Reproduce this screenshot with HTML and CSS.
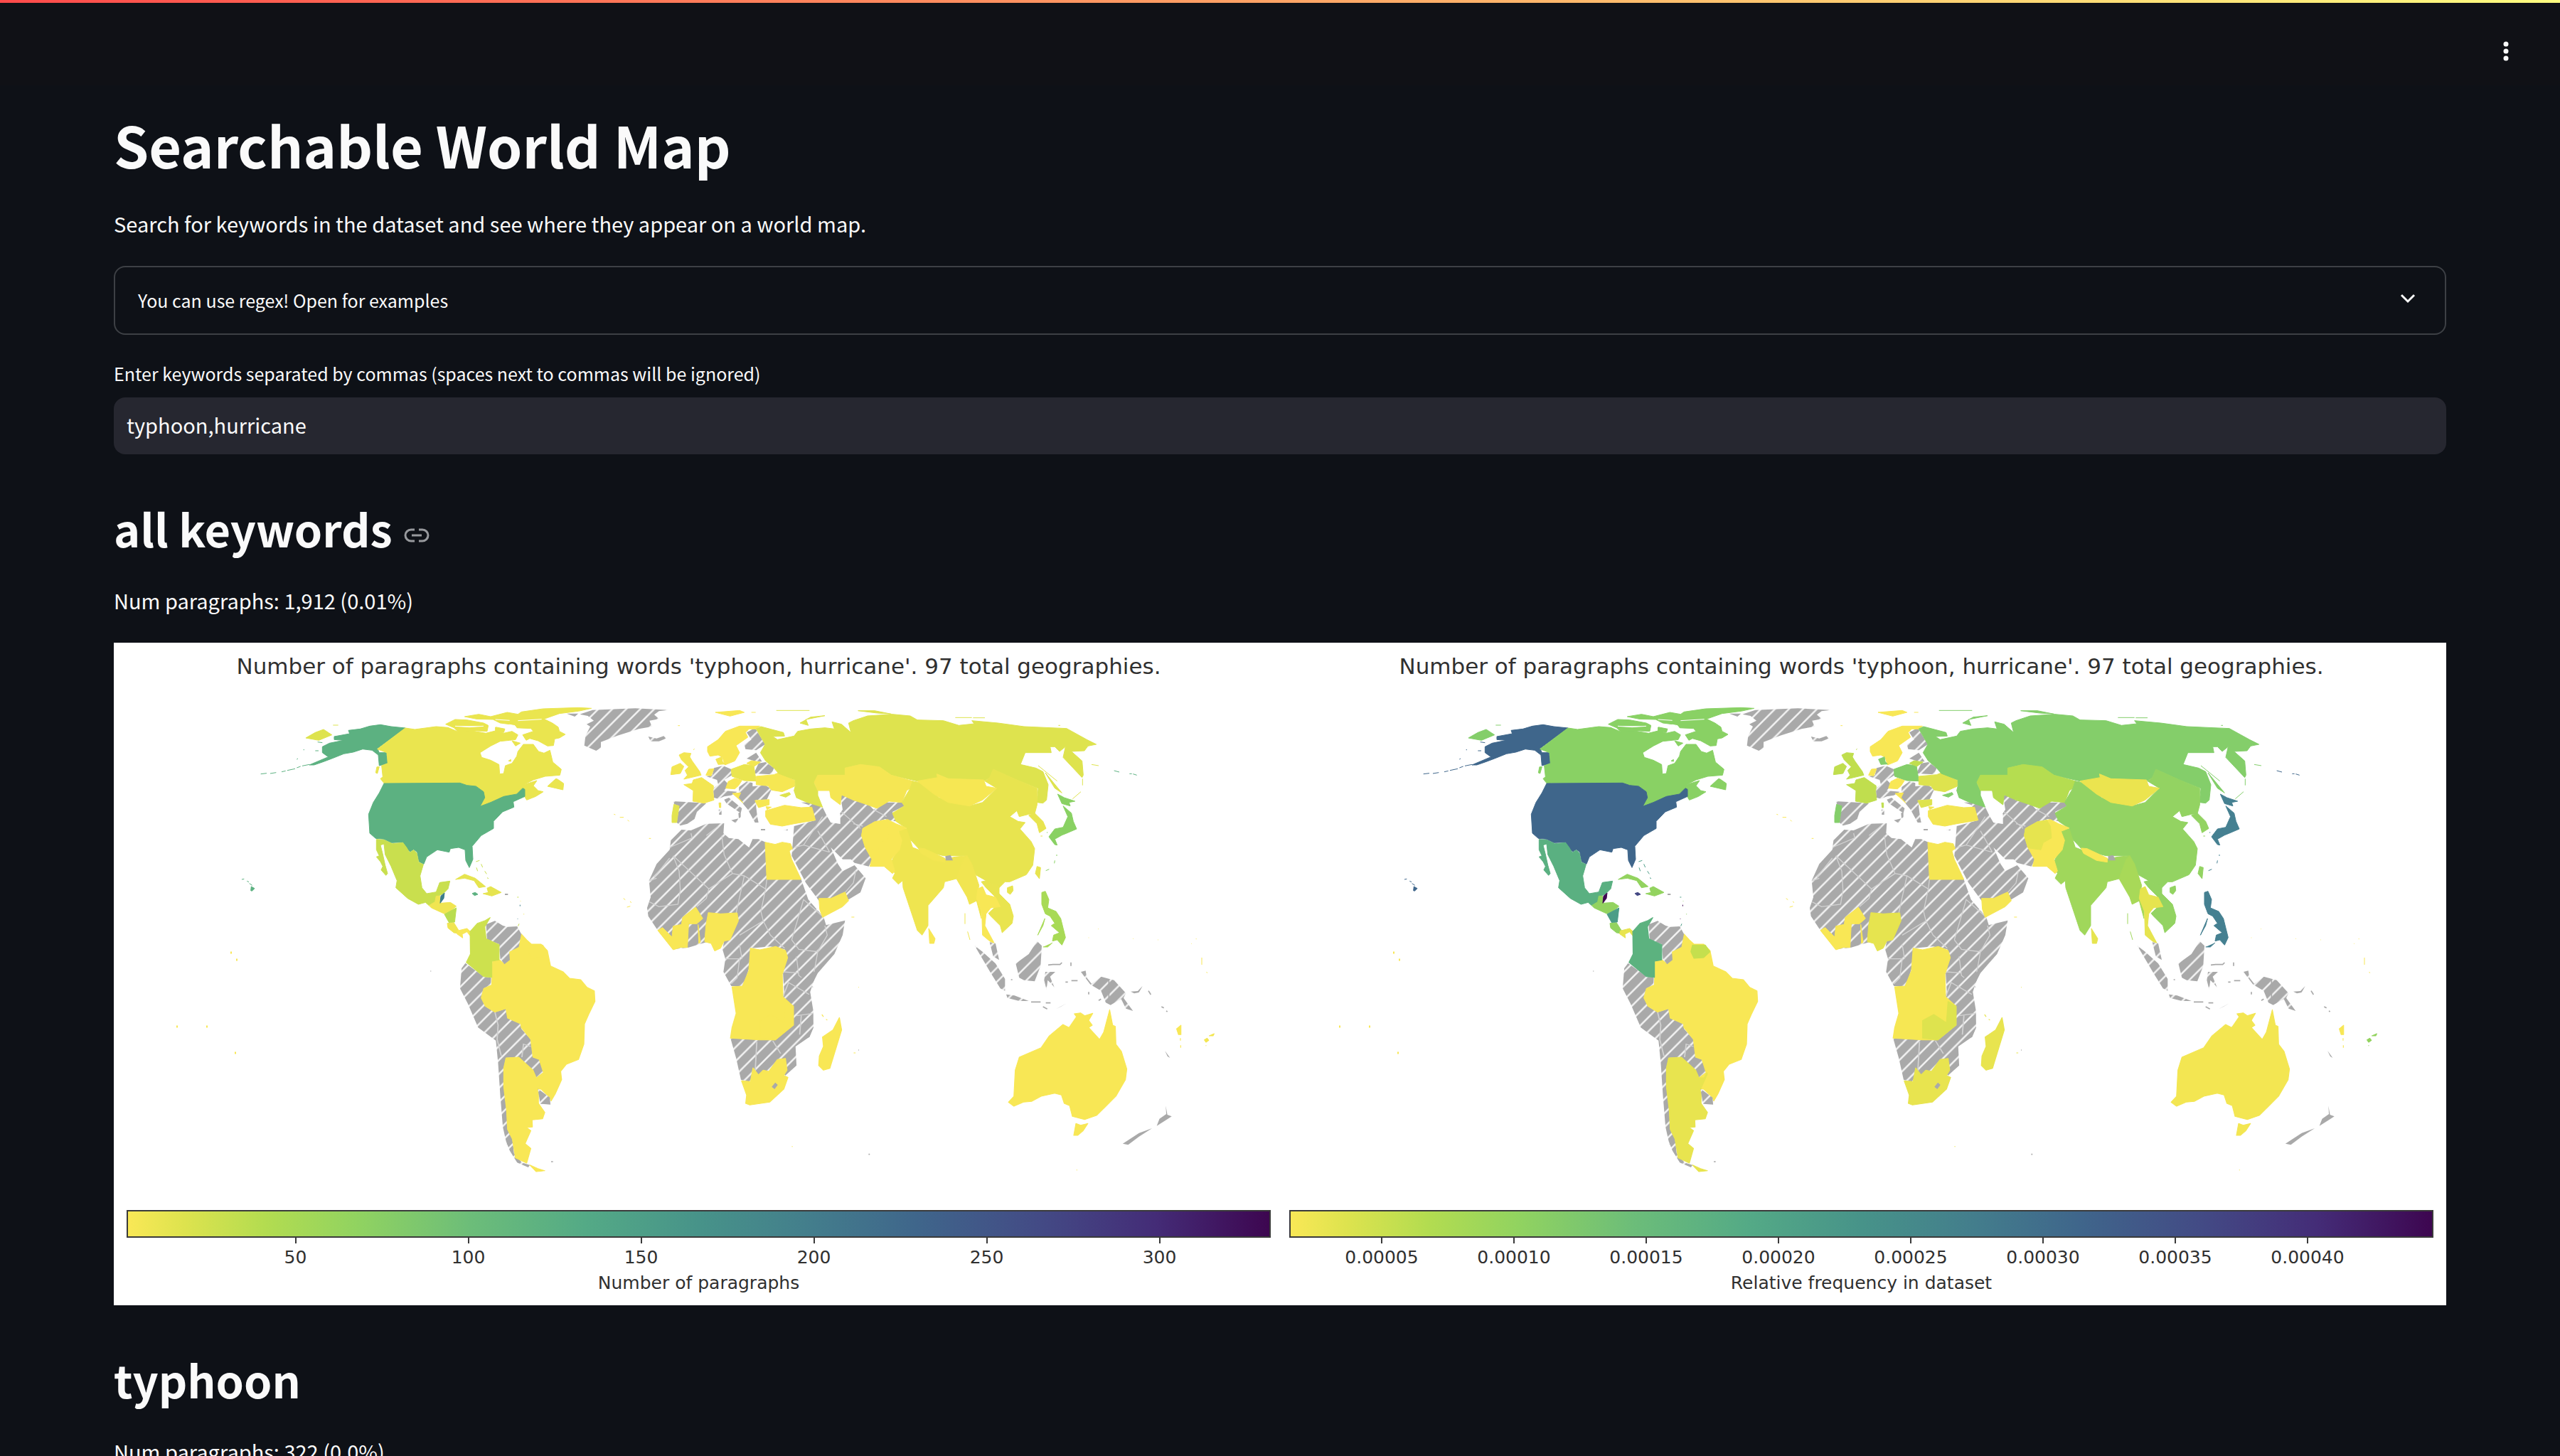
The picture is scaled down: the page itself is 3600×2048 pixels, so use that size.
FILE: index.html
```html
<!DOCTYPE html>
<html lang="en">
<head>
<meta charset="utf-8">
<title>Searchable World Map</title>
<link rel="stylesheet" href="styles.css">
</head>
<body>
<svg class="defs" width="0" height="0" aria-hidden="true">
  <defs>
    <pattern id="hatch" width="19.67" height="19.67" patternUnits="userSpaceOnUse">
      <rect width="20" height="20" fill="#a9a9a9"/>
      <path d="M-3 10.4L10.4 -3M4.4 22.67L22.67 4.4" stroke="#f4f4f4" stroke-width="2.4"/>
    </pattern>
    <pattern id="hatch-europe" href="#hatch" patternTransform="scale(3) translate(-780 -960)"/>
    <pattern id="hatch-asia" href="#hatch" patternTransform="scale(3) translate(-1200 -960)"/>
    <pattern id="hatch-south" href="#hatch" patternTransform="scale(2.24 3) translate(-600 -1240)"/>
  </defs>
  <symbol id="world" viewBox="178 953 1609 747">
    <!-- North and Central America -->
    <g transform="translate(320 960) scale(.33333)">
      <path class="land russia" d="M330 228L370 205L405 192L440 215L385 238ZM445 174h22"/>
      <path class="land usa" d="M450 222L515 210L510 196L560 190L600 178L645 172L690 180L750 186L632 272L640 290L670 290L676 335L640 345L636 300L610 280L570 275L530 288L490 295L440 315L400 330L365 342L345 342L425 308L400 290L400 265L430 250L490 238L450 235ZM140 380L165 377M180 378L205 374M228 371L245 367M252 365L285 358M292 354L308 348M315 346L345 340M370 282h14M380 245l20 3M292 318l5-3M320 278h4"/>
      <path class="land canada" d="M750 186L790 192L880 180L930 184L975 203L1010 195L1090 208L1130 198L1165 208L1200 200L1225 215L1215 235L1190 238L1150 242L1110 262L1065 290L1072 310L1110 322L1145 340L1148 380L1165 378L1172 345L1200 335L1220 305L1225 285L1248 255L1290 255L1312 285L1335 292L1360 280L1372 330L1408 360L1402 385L1340 390L1290 405L1250 425L1305 408L1290 430L1310 450L1332 455L1300 475L1262 490L1250 470L1245 440L1220 465L1165 475L1110 500L1065 517L1085 480L1080 455L1048 432L1010 428L980 418L680 418L665 425L645 400L655 392L650 345L676 335L672 290L632 275Z"/>
      <path class="land canada" d="M1350 432L1385 400L1392 402L1418 420L1415 447L1385 440ZM625 375L630 350L640 350L632 378ZM1185 325l10-6v8zM920 170L960 150L1010 152L1080 165L1100 175L1095 200L1050 198L1000 200L975 205L955 185ZM1000 138L1060 128L1110 138L1180 120L1225 128L1240 118L1330 105L1480 100L1535 103L1480 115L1400 125L1335 148L1370 165L1395 182L1400 200L1425 213L1400 228L1380 232L1375 260L1350 262L1310 240L1275 230L1260 238L1245 215L1290 200L1280 188L1215 185L1190 170L1150 165L1120 150L1050 148ZM1130 182L1170 190L1165 205L1130 200ZM1200 240L1235 250L1215 262Z"/>
      <path class="channel" d="M1100 172l20-6l12 14l-22 6zM1190 172l22 4l14 20l-20-6zM1130 150l60 4M1225 155l100-6M960 178l60 4l60-4"/>
      <path class="land usa" d="M660 420L980 418L1010 428L1048 432L1080 455L1085 480L1065 517L1110 500L1165 475L1220 465L1245 440L1254 445L1254 475L1205 497L1208 520L1160 540L1122 580L1122 610L1070 640L1032 685L1035 740L1020 775L1005 745L1002 700L975 690L940 695L935 710L885 700L840 730L828 760L808 750L800 710L785 698L770 708L755 695L740 668L690 670L660 655L625 652L600 630L595 550L615 500L640 460ZM60 825l10-2M82 832l8 4M92 842l12 8M98 872L100 855L114 863L103 874Z"/>
      <path class="land mexico" d="M628 656L660 658L695 674L740 670L755 690L768 712L785 701L798 713L806 752L826 762L812 810L820 860L840 885L880 878L895 838L938 832L930 865L910 885L890 895L875 920L850 935L835 922L805 930L760 905L710 860L715 830L690 770L665 720L660 675L645 680L655 720L665 765L675 800L668 808L648 785L655 770L645 750L628 730L640 725L628 700Z"/>
      <path class="land guatemala" d="M850 935L875 920L880 895L895 895L900 925L940 922L965 938L945 955L915 970L860 945Z"/>
      <path class="land belize" d="M897 925L900 895L915 882L912 905Z"/>
      <path class="land nicaragua" d="M915 972L965 945L958 1005L935 1008Z"/>
      <path class="land guatemala" d="M927 1010L955 1008L975 1040L970 1052L955 1050L930 1030Z"/>
      <path class="land panama" d="M970 1042L1010 1032L1030 1050L1025 1065L1010 1046L990 1056L992 1072L968 1055Z"/>
      <path class="land caribbean" d="M962 825L1000 803L1045 820L1088 855L1060 860L1040 830L1000 820ZM1078 885L1100 880L1095 862L1110 855L1155 880L1115 895Z"/>
      <path class="land bahamas" d="M1048 750l15-5M1050 775l5 15M1070 760l6 14M1085 790l8 12M1095 818l6 3M1222 900h6M1226 1022l4-10"/>
      <path class="land jamaica" d="M1032 884L1045 880L1056 888L1042 893Z"/>
      <path class="land guatemala" d="M1236 915v2M1250 970v3"/>
      <path class="land belize" d="M1234 932v6M1224 990v2"/>
      <path class="plain" d="M1170 885h13v6h-13z"/>
    </g>
    <!-- Northern Africa, Europe and the Middle East -->
    <g class="hatched-europe" transform="translate(780 960) scale(.33333)">
      <path class="none" d="M105 128L160 110L340 103L480 110L440 115L420 130L440 148L400 155L410 180L355 190L265 218L195 245L195 270L175 282L125 260L130 220L150 180L135 170L165 155L140 135ZM50 125L100 125L85 138ZM395 222L430 230L460 220L470 230L440 242L405 242Z"/>
      <path class="none" d="M535 615L575 618L640 590L715 588L712 630L735 650L775 655L820 690L835 655L860 655L890 668L895 825L1040 825L1070 910L1135 985L1145 1018L1225 998L1215 1060L1180 1140L1110 1220L1075 1290L1085 1360L1092 1450L1075 1490L1050 1500L940 1500L1005 1440L1005 1360L970 1330L962 1200L980 1140L970 1120L910 1108L830 1115L820 1200L795 1275L745 1275L712 1215L720 1160L708 1120L715 1085L640 1090L565 1112L500 1120L435 1040L395 980L390 945L405 900L398 830L430 760L485 700L490 660Z"/>
      <path class="none" d="M1100 575L1070 510L1040 500L1095 500L1130 520L1150 560L1165 585L1205 590L1195 560L1215 530L1205 470L1240 470L1260 492L1310 492L1345 530L1390 500L1470 500L1475 515L1425 540L1440 580L1410 575L1395 570L1345 585L1300 610L1300 640L1310 680L1340 740L1325 770L1265 755L1250 740L1215 740L1165 690L1195 760L1215 790L1265 765L1312 820L1290 880L1240 910L1130 920L1115 915L1060 840L1000 725L1010 600Z"/>
      <path class="none" d="M800 255L830 235L810 205L845 185L888 255L850 280L805 275ZM810 315L850 290L875 328L840 325ZM840 378L860 335L890 330L925 355L915 382ZM640 390L665 385L672 355L710 345L745 360L748 385L715 405L735 425L715 450L770 455L745 470L715 475L690 485L672 480L668 440L690 425L685 405ZM715 488L735 480L790 525L785 545L725 505ZM745 575L775 568L765 588ZM775 545l10-4v22l-8 4zM692 530h12v22h-10zM500 495L640 503L600 540L590 570L560 590L530 598L515 585L525 515L505 508ZM778 435L810 412L835 418L835 432L890 428L915 445L895 488L850 490L850 520L855 560L860 585L845 585L815 530L790 500L775 480ZM870 612h18v6h-18zM965 617l18-4v6z"/>
      <path class="border" d="M485 690L580 650L575 630M485 735L420 815M500 725L525 790L530 870L520 930L440 940L400 920M500 725L650 865L640 905L600 940M650 865L750 800L715 720L705 640M750 800L800 810L890 865L895 825M800 810L780 900L765 970M890 865L870 960L880 1000L910 1060L970 1115M880 1000L780 1060M1000 1080L1050 910L1135 985M1000 1080L1030 1120L1110 1130L1150 1060L1140 1020M1020 1150L1030 1230L1090 1280M1110 1130L1090 1240M965 1215L1030 1220M720 1160L780 1160L770 1240L745 1265M780 1100L790 1160M1005 1370L1090 1400M1010 690L1050 680L1160 710M1050 680L1110 590L1130 560M1160 710L1110 620M1270 790L1260 840L1225 880M1260 590L1300 600M1345 530L1400 560M400 830L430 820M1210 540L1290 610M640 640L690 600"/>
      <path class="sea" d="M1110 475L1160 447L1165 465L1145 475L1155 495L1205 550L1205 590L1165 585L1145 545Z"/>
      <path class="land brazil" d="M678 120L780 112L800 120L740 136ZM250 550l6 2M275 563h16M308 574l6 6M398 652h8M290 905l8 6M305 942l14-4M520 176h8M1252 984h12M318 918l6 5M830 120h18"/>
      <path class="land brazil" d="M435 1040L455 1028L495 1068L500 1022L535 1015L540 985L595 942L625 990L600 1012L565 1012L560 1112L530 1112L500 1122ZM605 1015L615 1090L608 1095Z"/>
      <path class="land nigeria" d="M648 965L700 970L770 966L775 1000L740 1080L715 1085L700 1115L675 1127L660 1095L633 1088L638 1020Z"/>
      <path class="land egypt" d="M888 668L930 677L960 668L995 674L1003 695L990 705L1000 740L1040 825L895 825ZM1115 905L1165 905L1225 878L1240 915L1215 940L1130 985L1118 950Z"/>
      <path class="land norway" d="M645 265L690 235L720 200L780 178L865 178L850 190L820 190L805 205L815 225L765 260L780 290L760 325L718 342L708 310L690 300L655 305L645 285ZM638 385L650 360L672 358L660 388ZM732 412L760 398L790 407L775 430L760 443L722 440ZM750 462L785 460L775 480L795 502Z"/>
      <path class="land denmark" d="M680 318L705 308L708 328L718 338L690 340Z"/>
      <path class="land uk" d="M525 300L545 290L575 293L570 308L580 325L612 370L618 385L545 402L560 385L550 365L565 350L535 320ZM490 383L495 350L530 335L545 348L530 378ZM585 278l5-4"/>
      <path class="land france" d="M545 425L580 420L585 405L620 395L670 430L668 455L672 490L630 503L583 495L585 450ZM693 502h8v20h-6z"/>
      <path class="land poland" d="M745 360L800 340L840 345L850 410L800 408L748 390Z"/>
      <path class="land uk" d="M810 335L830 324L868 330L842 348Z"/>
      <path class="land portugal" d="M503 508L525 515L515 585L495 585L495 555Z"/>
      <path class="land ukraine" d="M850 390L925 383L945 375L1015 408L1012 432L960 455L915 448L900 430L850 425ZM845 492L905 488L905 510L860 522Z"/>
      <path class="land turkey" d="M890 535L970 512L1040 522L1085 520L1100 575L1010 590L960 600L910 592L890 560ZM892 518l22 2l-18 10z"/>
    </g>
    <!-- Asia -->
    <g class="hatched-asia" transform="translate(1200 960) scale(.33333)">
      <path class="land russia" d="M-390 180L-295 205L-290 220L-340 222L-320 235L-250 220L-235 200L-180 190L-120 185L-80 190L-90 160L-50 170L-10 205L-20 165L0 155L60 135L165 128L240 135L270 152L380 155L445 175L510 168L500 155L610 165L720 180L900 188L985 235L1025 255L990 262L975 282L920 285L965 325L970 385L965 395L885 310L895 265L870 285L850 265L830 265L835 290L725 290L705 340L770 355L800 370L822 425L815 490L800 503L775 500L780 440L690 405L590 360L575 395L550 410L400 400L355 380L360 400L270 410L160 385L110 350L30 340L-35 355L-35 385L-150 385L-165 420L-150 450L-150 470L-130 520L-200 498L-240 480L-250 450L-245 430L-245 405L-315 378L-335 355L-370 325L-392 290L-372 255L-410 190Z"/>
      <path class="land russia" d="M-225 165L-180 140L-120 134L-200 150L-190 175ZM-325 112h140M20 113h70l70 14l-60-4zM430 142h70M505 143h50M780 345L860 410M810 375L880 460L850 440ZM967 400v28M960 455L925 485M1005 340l30 5M-310 470l40-12l5 8l-20 12zM865 175h8"/>
      <path class="land kazakhstan" d="M-35 355L30 340L110 350L160 385L250 410L240 440L225 450L205 500L150 495L100 525L60 510L0 490L-50 468L-55 510L-95 480L-100 450L-150 450L-165 415L-150 385L-35 385Z"/>
      <path class="land china" d="M250 410L300 420L360 480L490 515L545 500L605 440L555 410L575 395L590 360L690 405L775 440L775 510L765 548L740 550L700 560L690 535L660 560L695 580L725 585L703 612L750 665L765 695L757 765L730 805L660 835L640 835L615 860L590 845L560 830L515 805L480 725L380 725L280 700L225 640L225 610L180 580L165 545L215 515L205 500L240 440ZM650 860l22-8l2 20l-12 16l-12-8zM775 770L790 775L785 822L768 800ZM765 545L800 580L813 610L785 628L775 590L740 555ZM790 642h8"/>
      <path class="land mongolia" d="M270 410L355 395L352 380L400 400L550 405L560 432L605 440L545 490L490 515L400 500L340 465Z"/>
      <path class="land india" d="M190 610L225 612L250 690L380 740L430 730L480 725L470 760L435 822L385 835L380 860L315 935L315 1020L290 1060L270 1040L210 860L208 830L190 845L165 820L175 800L160 760L165 740L200 680ZM471 968v45M482 1045l10 35"/>
      <path class="land nepal" d="M275 693L300 695L385 735L385 752L340 745L285 715Z"/>
      <path class="plain" d="M388 727L410 722L420 745L390 745Z"/>
      <path class="land pakistan" d="M40 610L90 582L145 572L180 590L225 608L190 622L205 660L195 700L160 740L175 790L165 800L130 770L70 770L78 740L50 690L35 640Z"/>
      <path class="land afghanistan" d="M40 610L90 582L130 575L145 600L150 650L115 670L105 700L52 692L35 640Z"/>
      <path class="land burma" d="M435 822L465 740L480 725L500 760L515 805L530 850L520 905L540 960L540 990L520 915L490 930L480 900Z"/>
      <path class="land vietnam" d="M540 835L560 830L590 845L615 850L615 885L660 930L675 980L670 1010L628 1050L620 1020L580 980L570 968L600 940L600 900L560 860Z"/>
      <path class="land thailand" d="M525 865L545 855L560 890L600 900L620 940L580 945L560 970L555 1020L595 1095L575 1085L545 1060L542 960L520 905Z"/>
      <path class="land thailand" d="M318 1032L345 1075L340 1095L322 1095Z"/>
      <path class="land japan" d="M862 465L890 480L935 495L910 500L915 515L880 505ZM885 515L920 545L928 580L942 612L900 630L880 638L850 655L860 680L850 678L825 645L850 612L885 605L905 560ZM858 720v6M850 745l-2 12M812 788l14-6M818 625v4"/>
      <path class="land usa" d="M1100 366l22 6M1165 379h10M1180 380l16 5"/>
      <path class="land philippines" d="M795 880L810 875L825 910L820 945L855 960L875 990L885 1030L895 1070L880 1102L860 1080L840 1085L845 1060L870 1050L835 1020L850 1010L830 980L810 970L795 930ZM808 990L800 1020L778 1060L795 1020ZM800 1110h20l20-18"/>
      <path class="none" d="M512 1105L545 1130L600 1180L640 1245L640 1295L620 1285L580 1220ZM575 1090L600 1095L615 1165L590 1150ZM685 1180L740 1140L775 1085L795 1105L790 1190L765 1255L720 1250L700 1240ZM810 1215L852 1215L830 1235L848 1280L835 1265L820 1250L815 1290L805 1250ZM645 1310L680 1315L740 1338L700 1338L650 1325ZM960 1215L980 1210L985 1240L1005 1265L1045 1235L1100 1250L1150 1305L1140 1325L1180 1380L1150 1370L1130 1330L1085 1355L1065 1345L1045 1295L1000 1268L975 1235ZM855 1372L900 1348L875 1362ZM1170 1298L1200 1296L1220 1275L1205 1302L1185 1306Z"/>
      <path class="islands" d="M750 1342h40M812 1346h20M800 1362l18 10M822 1186l20-2h30l8-8M918 1175v15M895 1258h10M920 1252h26M1035 1336l10-6M1245 1295l10 16M1300 1362l10 5M1320 1380l5 3M665 1248h6M993 1300v10M1078 1245v90"/>
      <path class="land brazil" d="M1180 1075h2M1284 1080h2M1425 1096h2M1445 1076h3M1470 1155v30M1490 1215l3 5M993 1070v2M1033 1034h2"/>
    </g>
    <!-- South America and southern Africa -->
    <g class="hatched-south" transform="translate(600 1240) scale(.44643 .33333)">
      <path class="none" d="M122 338L180 395L203 400L202 430L180 445L172 485L190 525L215 545L250 530L255 570L297 595L298 615L328 660L335 735L355 745L368 775L366 815L345 822L335 800L290 735L250 738L243 780L243 860L252 960L255 1040L270 1080L275 1140L300 1180L325 1190L320 1200L285 1180L262 1130L250 1090L240 1030L232 900L225 760L218 665L162 610L130 510L105 445L110 360Z"/>
      <path class="none" d="M1180 400L1230 370L1208 460L1218 540L1218 610L1205 650L1162 690L1165 770L1130 812L1110 790L1080 800L1030 810L1015 840L990 830L975 740L957 655L1098 662L1155 600L1155 520L1122 480Z"/>
      <path class="border" d="M215 545L225 600L222 660L235 730M300 735L305 680L328 690M1035 790L1040 670M1090 665L1115 720M1165 560L1218 550M1180 560L1175 640M1122 480L1140 420L1205 470"/>
      <path class="land brazil" d="M298 215L315 240L330 258L360 258L380 285L390 350L430 375L450 402L485 408L505 440L528 455L530 500L510 555L497 595L495 680L478 745L440 765L422 795L425 830L405 890L392 920L388 905L360 870L350 870L348 820L368 800L355 745L335 735L328 660L298 610L297 595L255 570L250 530L215 545L185 520L172 485L180 445L205 430L208 330L230 325L245 343L262 325L260 290L290 270Z"/>
      <path class="land suriname" d="M325 262L365 262L380 290L360 315L330 318L320 290Z"/>
      <path class="none" d="M187 175L215 160L240 180L255 185L285 183L298 215L290 270L260 290L262 325L245 343L232 320L228 258L190 238Z"/>
      <path class="land colombia" d="M137 205L160 170L185 158L200 146L183 185L187 235L228 260L228 325L205 330L205 398L180 395L125 335L138 300Z"/>
      <path class="land argentina" d="M250 738L290 735L335 790L345 822L362 822L370 800L372 805L352 865L352 930L372 968L365 995L332 1000L333 1030L315 1032L328 1045L310 1100L328 1120L315 1182L280 1160L270 1080L255 1040L252 960L243 860L243 780ZM325 1190L350 1205L372 1214L345 1218Z"/>
      <path class="none" d="M350 868L388 905L390 935L358 932Z"/>
      <path class="land congo" d="M1020 275L1050 282L1100 268L1130 285L1137 315L1120 385L1122 480L1155 520L1155 600L1098 662L1050 662L957 655L962 610L975 550L962 438L995 435L1015 370Z"/>
      <path class="land zambia" d="M1130 500L1155 520L1155 600L1098 662L1050 655L1050 580L1085 555L1125 590Z"/>
      <path class="land safrica" d="M992 835L1020 838L1028 780L1045 810L1060 790L1078 795L1105 745L1130 740L1135 790L1125 812L1138 820L1125 870L1080 925L1018 937L1005 930L1008 895Z"/>
      <path class="plain" d="M1087 860L1098 842L1106 852L1096 870Z"/>
      <path class="land safrica" d="M1300 568L1307 620L1270 782L1250 790L1235 770L1237 730L1250 690L1247 650L1280 620ZM1245 555l5 10M1258 575l4 4M1345 717h6M1150 1112h3M1360 440h2"/>
      <path class="islands" d="M392 1176h6M1392 1145h4M12 372h2M1360 705h2M255 1100v3"/>
    </g>
    <!-- Oceania -->
    <g transform="translate(1200 1240) scale(.38265 .33333)">
      <path class="land australia" d="M570 925L590 900L595 790L610 735L690 695L720 645L770 597L793 610L820 565L812 552L835 548L850 560L880 550L865 580L878 600L865 610L905 660L920 630L942 535L953 600L963 605L965 680L985 710L1005 785L1000 830L965 900L930 940L895 980L850 998L805 985L795 940L775 930L765 895L740 887L690 900L655 922L625 925L590 942ZM818 1015L835 1022L862 1015L845 1045L825 1065L810 1065ZM820 1211h3"/>
      <path class="plain" d="M990 1100L1050 1055L1098 1035L1050 1070L1010 1105ZM1115 1025L1125 995L1150 975L1148 940L1154 978L1170 985L1150 1000ZM1145 708L1164 738L1155 732Z"/>
      <path class="land norway" d="M1188 615L1204 600L1204 640L1195 640ZM1202 655v10M1203 685v10"/>
      <path class="land fiji" d="M1290 662L1300 655L1306 664L1296 672ZM1308 645L1326 636L1322 645ZM1296 685v3"/>
    </g>
    <path class="land brazil" d="M290 1442h2M324 1338h2M332 1348h2M248 1442h2M330 1479h2"/>
  </symbol>
</svg>

<div class="app">
  <header class="topbar">
    <button class="menu" type="button" aria-label="Main menu">
      <svg viewBox="0 0 32 32" width="32" height="32"><circle cx="16" cy="6" r="3.5"/><circle cx="16" cy="16" r="3.5"/><circle cx="16" cy="26" r="3.5"/></svg>
    </button>
  </header>
  <main class="content">
    <h1>Searchable World Map</h1>
    <p class="text">Search for keywords in the dataset and see where they appear on a world map.</p>

    <details class="expander">
      <summary>
        <span>You can use regex! Open for examples</span>
        <svg viewBox="0 0 40 40" width="40" height="40" aria-hidden="true"><path d="M11 13L20 22L29 13"/></svg>
      </summary>
    </details>

    <form class="field">
      <label for="keywords">Enter keywords separated by commas (spaces next to commas will be ignored)</label>
      <input id="keywords" type="text" value="typhoon,hurricane">
    </form>

    <section class="result" id="all-keywords">
      <div class="heading">
        <h2>all keywords</h2>
        <a href="#all-keywords" aria-label="Link to this section">
          <svg viewBox="0 0 36 20" width="36" height="20"><path d="M15 2H10A8 8 0 0 0 10 18H15M21 2H26A8 8 0 0 1 26 18H21M11 10H25"/></svg>
        </a>
      </div>
      <p class="text">Num paragraphs: 1,912 (0.01%)</p>
      <div class="charts">
        <figure class="plot count">
          <figcaption>Number of paragraphs containing words 'typhoon, hurricane'. 97 total geographies.</figcaption>
          <svg class="map" viewBox="178 953 1609 747" role="img" aria-label="World map of paragraph counts"><use href="#world" x="178" y="953" width="1609" height="747"/></svg>
          <div class="colorbar"></div>
          <div class="ticks">
            <span>50</span><span>100</span><span>150</span><span>200</span><span>250</span><span>300</span>
          </div>
          <div class="axis">Number of paragraphs</div>
        </figure>
        <figure class="plot frequency">
          <figcaption>Number of paragraphs containing words 'typhoon, hurricane'. 97 total geographies.</figcaption>
          <svg class="map" viewBox="178 953 1609 747" role="img" aria-label="World map of relative frequency"><use href="#world" x="178" y="953" width="1609" height="747"/></svg>
          <div class="colorbar"></div>
          <div class="ticks">
            <span>0.00005</span><span>0.00010</span><span>0.00015</span><span>0.00020</span><span>0.00025</span><span>0.00030</span><span>0.00035</span><span>0.00040</span>
          </div>
          <div class="axis">Relative frequency in dataset</div>
        </figure>
      </div>
    </section>

    <section class="result" id="typhoon">
      <div class="heading"><h2>typhoon</h2></div>
      <p class="text">Num paragraphs: 322 (0.0%)</p>
    </section>
  </main>
</div>
</body>
</html>
```
FILE: styles.css
```css
* { box-sizing: border-box; }

body {
  margin: 0;
  background: #0e1117;
  color: #fafafa;
  font-family: "Noto Sans CJK SC", "Noto Sans", sans-serif;
  font-size: 29px;
  line-height: 50px;
}

h1, h2, p, figure { margin: 0; }

.defs { position: absolute; }

.app {
  height: 100vh;
  overflow: auto;
  scrollbar-width: none;
}

.topbar {
  display: flex;
  justify-content: flex-end;
  align-items: center;
  height: 120px;
  padding: 24px 60px 0 0;
  background: linear-gradient(90deg, #ff4b4b, #fffd80) top / 100% 4px no-repeat #101116;
}

.menu {
  display: flex;
  padding: 0;
  border: 0;
  background: none;
}

.menu svg { fill: #fafafa; }

.content { padding: 33px 160px 64px; }

h1 {
  margin-bottom: 36px;
  font-size: 79px;
  font-weight: 700;
  line-height: 100px;
}

.expander {
  margin-top: 35px;
  border: 2px solid #3d4045;
  border-radius: 16px;
  font-size: 25px;
}

.expander summary {
  display: flex;
  justify-content: space-between;
  align-items: center;
  height: 93px;
  padding: 0 32px 2px;
  list-style: none;
}

.expander svg {
  fill: none;
  stroke: #fafafa;
  stroke-width: 3;
}

.field {
  display: flex;
  flex-direction: column;
  gap: 14px;
  margin-top: 34px;
}

.field label {
  font-size: 25px;
  line-height: 40px;
}

.field input {
  height: 80px;
  padding: 0 18px 4px;
  border: 0;
  border-radius: 16px;
  background: #262730;
  color: #fafafa;
  font: inherit;
}

.result { margin-top: 64px; }

.heading {
  display: flex;
  align-items: center;
  gap: 16px;
  margin-bottom: 36px;
}

h2 {
  font-size: 63px;
  font-weight: 700;
  line-height: 80px;
}

.heading a {
  display: flex;
  padding-top: 20px;
}

.heading svg {
  fill: none;
  stroke: #97999d;
  stroke-width: 3;
}

/* Charts */

.charts {
  display: grid;
  grid-template-columns: 1fr 1fr;
  gap: 26px;
  margin-top: 35px;
  padding: 15px 18px;
  background: #fff;
  color: #303030;
  font-family: "DejaVu Sans", sans-serif;
  font-size: 25px;
  line-height: 32px;
  text-align: center;
}

.plot figcaption {
  font-size: 31px;
  line-height: 36px;
}

.map {
  display: block;
  width: 100%;
}

.colorbar {
  height: 39px;
  border: 2px solid #3a3a3a;
  background: linear-gradient(90deg, #f9e856, #dde34e 5%, #b3dc50 12%, #91d360 20%, #6cbd79 30%, #54aa86 40%, #479389 50%, #437d8c 60%, #3f668b 69%, #434a85 80%, #442c77 90%, #3d0650);
}

.ticks {
  display: grid;
  grid-template-columns: 116fr repeat(6, 243fr) 35fr;
}

.frequency .ticks { grid-template-columns: 37fr repeat(8, 186fr) 84fr; }

.ticks span:first-child { grid-column: 2; }

.ticks span::before {
  content: "";
  display: block;
  width: 2px;
  height: 8px;
  margin: 0 auto 4px;
  background: #3a3a3a;
}

.axis { padding-top: 4px; }

/* Map regions */

.land {
  fill: currentColor;
  stroke: currentColor;
  stroke-width: 3;
  stroke-linejoin: round;
}

.plain { fill: #a9a9a9; }
.sea { fill: #fff; }
.channel { fill: #fff; stroke: #fff; stroke-width: 3; }
.border { fill: none; stroke: #d2d2d2; stroke-width: 4; }
.islands { fill: none; stroke: #a9a9a9; stroke-width: 5; }
.hatched-europe .none { fill: url(#hatch-europe); }
.hatched-asia .none { fill: url(#hatch-asia); }
.hatched-south .none { fill: url(#hatch-south); }

.count {
  --usa: #5cb181; --canada: #eae54f; --mexico: #c9df4e; --guatemala: #f0e551;
  --belize: #3c7c8b; --nicaragua: #b9dd4f; --panama: #f8e755; --caribbean: #e6e44f;
  --bahamas: #c9df4e; --jamaica: #5cb181; --colombia: #cde14e; --brazil: #f8e755;
  --suriname: #f8e755; --argentina: #f8e755; --nigeria: #f8e755; --egypt: #f8e755;
  --congo: #f8e755; --zambia: #f8e755; --safrica: #f8e755; --norway: #f8e755;
  --denmark: #f3e652; --uk: #f3e652; --france: #f3e652; --poland: #eae54f;
  --portugal: #e3e44f; --ukraine: #f6e753; --turkey: #f8e755; --russia: #dee34e;
  --kazakhstan: #f5e653; --china: #e8e44f; --mongolia: #f6e753; --india: #efe550;
  --nepal: #f3e652; --pakistan: #f8e755; --afghanistan: #f8e755; --burma: #f1e551;
  --vietnam: #e9e44f; --thailand: #f8e755; --japan: #89d163; --philippines: #a8da56;
  --australia: #f8e755; --fiji: #f3e652;
}

.frequency {
  --usa: #3f668b; --canada: #89d164; --mexico: #5ab081; --guatemala: #93d35f;
  --belize: #3d0650; --nicaragua: #4b9d87; --panama: #e8e44f; --caribbean: #93d35f;
  --bahamas: #4b9d87; --jamaica: #434783; --colombia: #5cb27f; --brazil: #f8e755;
  --suriname: #c5df4e; --argentina: #e8e44f; --nigeria: #e6e44f; --egypt: #f5e653;
  --congo: #f6e753; --zambia: #dee34e; --safrica: #e8e44f; --norway: #f8e755;
  --denmark: #84ce6a; --uk: #c0de4e; --france: #c0de4e; --poland: #84ce6a;
  --portugal: #84ce6a; --ukraine: #dee34e; --turkey: #f3e652; --russia: #84ce6a;
  --kazakhstan: #b5dd50; --china: #93d362; --mongolia: #ebe44f; --india: #a0d75b;
  --nepal: #f8e755; --pakistan: #f8e755; --afghanistan: #e6e44f; --burma: #a8d958;
  --vietnam: #93d362; --thailand: #e6e44f; --japan: #458091; --philippines: #458091;
  --australia: #f3e652; --fiji: #93d35f;
}

.usa { color: var(--usa); }
.canada { color: var(--canada); }
.mexico { color: var(--mexico); }
.guatemala { color: var(--guatemala); }
.belize { color: var(--belize); }
.nicaragua { color: var(--nicaragua); }
.panama { color: var(--panama); }
.caribbean { color: var(--caribbean); }
.bahamas { color: var(--bahamas); }
.jamaica { color: var(--jamaica); }
.colombia { color: var(--colombia); }
.brazil { color: var(--brazil); }
.suriname { color: var(--suriname); }
.argentina { color: var(--argentina); }
.nigeria { color: var(--nigeria); }
.egypt { color: var(--egypt); }
.congo { color: var(--congo); }
.zambia { color: var(--zambia); }
.safrica { color: var(--safrica); }
.norway { color: var(--norway); }
.denmark { color: var(--denmark); }
.uk { color: var(--uk); }
.france { color: var(--france); }
.poland { color: var(--poland); }
.portugal { color: var(--portugal); }
.ukraine { color: var(--ukraine); }
.turkey { color: var(--turkey); }
.russia { color: var(--russia); }
.kazakhstan { color: var(--kazakhstan); }
.china { color: var(--china); }
.mongolia { color: var(--mongolia); }
.india { color: var(--india); }
.nepal { color: var(--nepal); }
.pakistan { color: var(--pakistan); }
.afghanistan { color: var(--afghanistan); }
.burma { color: var(--burma); }
.vietnam { color: var(--vietnam); }
.thailand { color: var(--thailand); }
.japan { color: var(--japan); }
.philippines { color: var(--philippines); }
.australia { color: var(--australia); }
.fiji { color: var(--fiji); }
```
